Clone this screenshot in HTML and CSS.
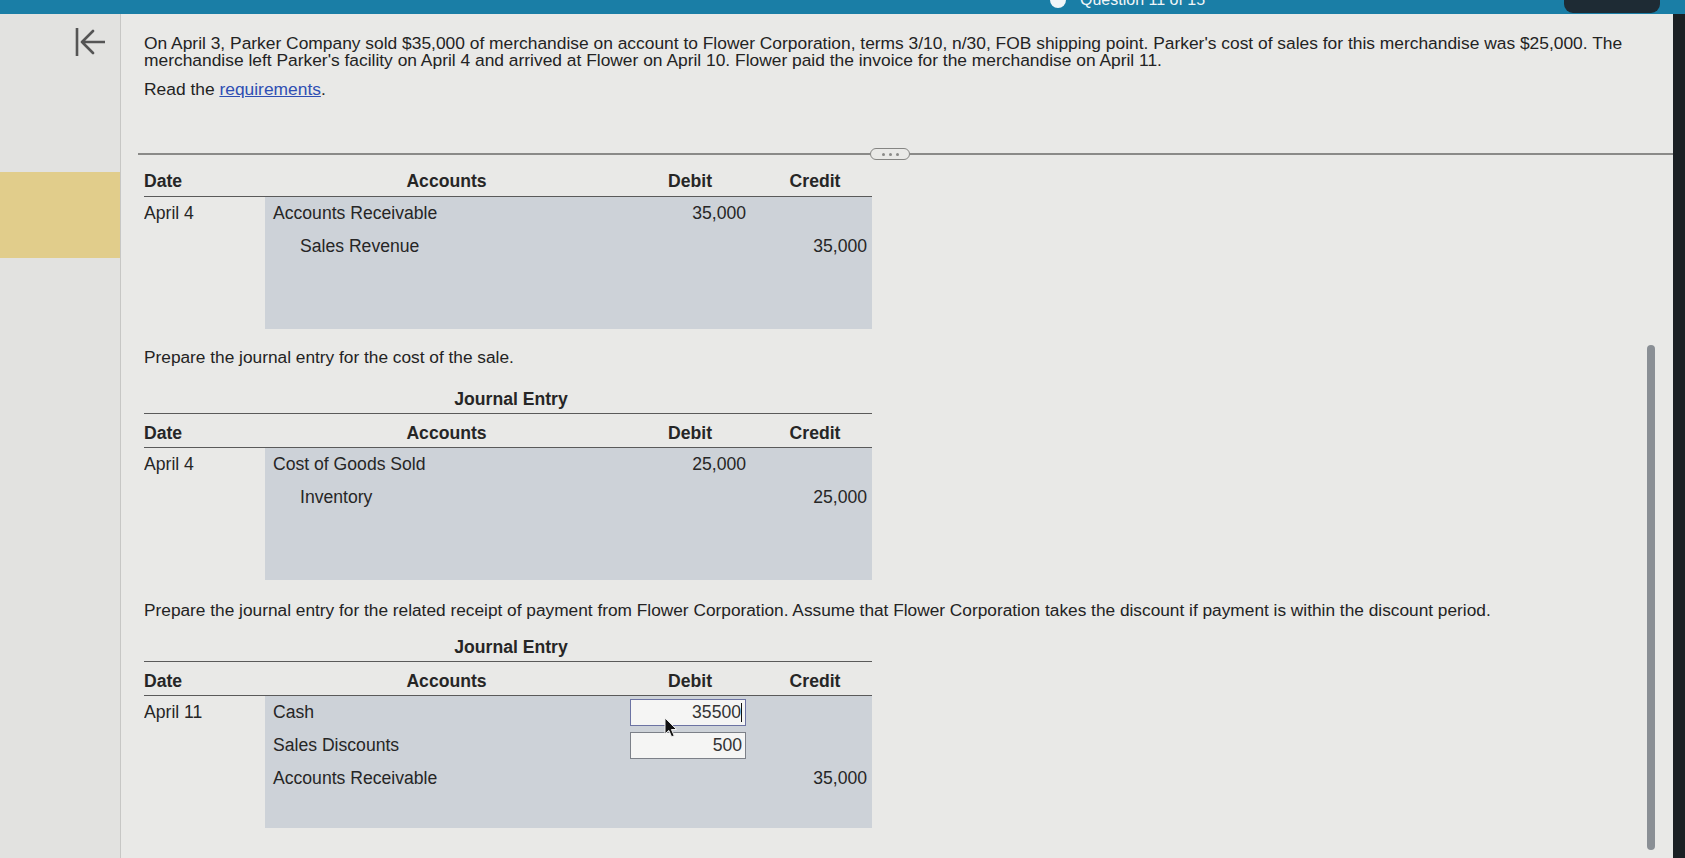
FILE: index.html
```html
<!DOCTYPE html>
<html lang="en">
<head>
<meta charset="utf-8">
<title>Journal Entry</title>
<link rel="stylesheet" href="styles.css">
</head>
<body>
<div class="topbar">
  <div class="status"><span class="status-dot"></span><span class="status-text">Question 11 of 15</span></div>
  <div class="topbtn"></div>
</div>
<div class="app">
  <aside class="sidebar">
    <div class="back">
      <svg width="30" height="28" viewBox="0 0 30 28"><path d="M2 0 V28 M7 14 H30 M18 3 L7 14 L18 25" fill="none" stroke="#555" stroke-width="2.6" stroke-linecap="round" stroke-linejoin="round"/></svg>
    </div>
    <div class="marker"></div>
  </aside>
  <main class="page">
    <div class="intro">
      <p class="lead">On April 3, Parker Company sold $35,000 of merchandise on account to Flower Corporation, terms 3/10, n/30, FOB shipping point. Parker's cost of sales for this merchandise was $25,000. The merchandise left Parker's facility on April 4 and arrived at Flower on April 10. Flower paid the invoice for the merchandise on April 11.</p>
      <p class="read">Read the <a class="link" href="#">requirements</a>.</p>
    </div>
    <div class="divider">
      <span class="rule rule-left"></span>
      <span class="pill"><i></i><i></i><i></i></span>
      <span class="rule rule-right"></span>
    </div>
    <div class="scroll">
      <div class="scroll-content">
        <div class="journal first">
          <div class="jhead">
            <div class="h-date">Date</div>
            <div class="h-acc">Accounts</div>
            <div class="h-num">Debit</div>
            <div class="h-num">Credit</div>
          </div>
          <div class="jbody">
            <div class="c-date">April 4</div>
            <div class="c-acc">Accounts Receivable</div>
            <div class="c-num">35,000</div>
            <div class="c-num cr"></div>

            <div class="c-date"></div>
            <div class="c-acc indent">Sales Revenue</div>
            <div class="c-num"></div>
            <div class="c-num cr">35,000</div>

            <div class="c-date"></div><div class="c-acc"></div><div class="c-num"></div><div class="c-num cr"></div>
            <div class="c-date"></div><div class="c-acc"></div><div class="c-num"></div><div class="c-num cr"></div>
          </div>
        </div>

        <p class="prompt p1">Prepare the journal entry for the cost of the sale.</p>

        <div class="journal">
          <div class="jtitle">Journal Entry</div>
          <div class="jhead">
            <div class="h-date">Date</div>
            <div class="h-acc">Accounts</div>
            <div class="h-num">Debit</div>
            <div class="h-num">Credit</div>
          </div>
          <div class="jbody">
            <div class="c-date">April 4</div>
            <div class="c-acc">Cost of Goods Sold</div>
            <div class="c-num">25,000</div>
            <div class="c-num cr"></div>

            <div class="c-date"></div>
            <div class="c-acc indent">Inventory</div>
            <div class="c-num"></div>
            <div class="c-num cr">25,000</div>

            <div class="c-date"></div><div class="c-acc"></div><div class="c-num"></div><div class="c-num cr"></div>
            <div class="c-date"></div><div class="c-acc"></div><div class="c-num"></div><div class="c-num cr"></div>
          </div>
        </div>

        <p class="prompt p2">Prepare the journal entry for the related receipt of payment from Flower Corporation. Assume that Flower Corporation takes the discount if payment is within the discount period.</p>

        <div class="journal third">
          <div class="jtitle">Journal Entry</div>
          <div class="jhead">
            <div class="h-date">Date</div>
            <div class="h-acc">Accounts</div>
            <div class="h-num">Debit</div>
            <div class="h-num">Credit</div>
          </div>
          <div class="jbody">
            <div class="c-date">April 11</div>
            <div class="c-acc">Cash</div>
            <div class="c-num field-cell">
              <div class="field focused">35500<span class="caret"></span></div>
              <svg class="pointer" width="14" height="22" viewBox="0 0 14 22"><path d="M1 1 L1 17 L4.8 13.4 L7.6 19.8 L10.2 18.7 L7.4 12.5 L12.6 12.5 Z" fill="#111" stroke="#f0f0f0" stroke-width="1" stroke-linejoin="round"/></svg>
            </div>
            <div class="c-num cr"></div>

            <div class="c-date"></div>
            <div class="c-acc">Sales Discounts</div>
            <div class="c-num field-cell"><div class="field">500</div></div>
            <div class="c-num cr"></div>

            <div class="c-date"></div>
            <div class="c-acc">Accounts Receivable</div>
            <div class="c-num"></div>
            <div class="c-num cr">35,000</div>

            <div class="c-date"></div><div class="c-acc"></div><div class="c-num"></div><div class="c-num cr"></div>
          </div>
        </div>
      </div>
      <div class="track"><div class="thumb"></div></div>
    </div>
  </main>
  <div class="edge"></div>
</div>
</body>
</html>
```
FILE: styles.css
```css
* { box-sizing: border-box; }

html, body {
  margin: 0;
  padding: 0;
}

body {
  width: 1685px;
  height: 858px;
  overflow: hidden;
  background: #e9e9e7;
  font-family: "Liberation Sans", Arial, Helvetica, sans-serif;
  font-size: 17px;
  color: #262626;
}

/* top bar */
.topbar {
  height: 14px;
  background: #1a7ea6;
  display: flex;
  align-items: flex-end;
  overflow: hidden;
}

.status {
  display: flex;
  align-items: center;
  gap: 14px;
  margin-left: 1050px;
  margin-bottom: 5px;
  color: #f2f6f8;
  font-size: 16px;
  line-height: 18px;
}

.status-dot {
  width: 16px;
  height: 16px;
  border-radius: 50%;
  background: #f2f6f8;
}

.topbtn {
  margin-left: auto;
  margin-right: 25px;
  align-self: flex-start;
  width: 96px;
  height: 13px;
  background: #1e2b34;
  border-radius: 0 0 9px 9px;
}

/* app layout */
.app {
  display: flex;
  height: 844px;
}

.sidebar {
  width: 121px;
  flex: none;
  background: #e2e2e0;
  border-right: 1px solid #c7c7c5;
  padding-top: 14px;
}

.back {
  margin-left: 75px;
  width: 30px;
  height: 28px;
}

.back svg { display: block; }

.marker {
  margin-top: 116px;
  height: 86px;
  background: #e1cd8b;
}

.page {
  flex: 1;
  min-width: 0;
  padding-left: 23px;
  display: flex;
  flex-direction: column;
  overflow: hidden;
}

.edge {
  width: 12px;
  flex: none;
  background: #1b2024;
}

/* intro */
.intro {
  padding-top: 21px;
}

.lead {
  margin: 0;
  width: 1500px;
  font-size: 17.4px;
  line-height: 17px;
  color: #232323;
}

.read {
  margin: 12px 0 0;
  font-size: 17.4px;
  line-height: 17px;
  color: #232323;
}

.link {
  color: #2f4fb3;
  text-decoration: underline;
}

/* divider */
.divider {
  margin-top: 50px;
  margin-left: -6px;
  height: 12px;
  display: flex;
  align-items: center;
}

.rule {
  height: 1.5px;
  background: #8a8a88;
}

.rule-left { width: 732px; }
.rule-right { flex: 1; }

.pill {
  width: 40px;
  height: 12px;
  border: 1.5px solid #858583;
  border-radius: 6px;
  display: flex;
  align-items: center;
  justify-content: center;
  gap: 4px;
}

.pill i {
  width: 3px;
  height: 3px;
  border-radius: 50%;
  background: #8a8a88;
}

/* scroll region */
.scroll {
  margin-top: 6px;
  flex: 1;
  display: flex;
  overflow: hidden;
}

.scroll-content {
  flex: 1;
}

.track {
  width: 8px;
  margin-right: 18px;
  flex: none;
}

.thumb {
  margin-top: 179px;
  height: 505px;
  border-radius: 4px;
  background: #8a8f95;
}

/* journals */
.journal {
  width: 728px;
  font-size: 17.6px;
}

.jtitle {
  text-align: center;
  font-weight: bold;
  line-height: 20px;
  padding-bottom: 4px;
  border-bottom: 1.5px solid #5a5a5a;
  padding-left: 6px;
}

.jhead,
.jbody {
  display: grid;
  grid-template-columns: 121px 363px 124px 120px;
}

.jhead {
  height: 34px;
  align-items: end;
  padding-bottom: 4px;
  border-bottom: 1.5px solid #5a5a5a;
  font-weight: bold;
  line-height: 20px;
}

.first .jhead {
  height: 30.5px;
  padding-bottom: 5px;
}

.h-date { padding-left: 0; }
.h-acc { text-align: center; }
.h-num { text-align: center; }
.jhead .h-num:last-child { padding-left: 6px; }

.jbody > div {
  height: 33px;
  line-height: 33px;
  white-space: nowrap;
}

.c-acc,
.c-num {
  background: #cdd2d8;
}

.c-acc { padding-left: 8px; }
.c-acc.indent { padding-left: 35px; }

.c-num {
  text-align: right;
  padding-right: 6px;
}

.c-num.cr { padding-right: 5px; }

.prompt {
  margin: 0;
  font-size: 17.3px;
  line-height: 20px;
  color: #232323;
}

.p1 { margin-top: 18px; margin-bottom: 22px; }
.p2 { margin-top: 20px; margin-bottom: 17px; }

/* input fields */
.field-cell {
  display: flex;
  align-items: center;
  justify-content: flex-end;
  position: relative;
}

.field {
  width: 116px;
  height: 27px;
  border: 1.5px solid #7c8088;
  background: #f5f5f4;
  line-height: 24px;
  text-align: right;
  padding-right: 3px;
  color: #333;
}

.field.focused {
  border-color: #6c73a3;
}

.caret {
  display: inline-block;
  width: 1px;
  height: 19px;
  background: #111;
  vertical-align: -4px;
}

.pointer {
  position: absolute;
  left: 36px;
  top: 21px;
  z-index: 3;
}
```
